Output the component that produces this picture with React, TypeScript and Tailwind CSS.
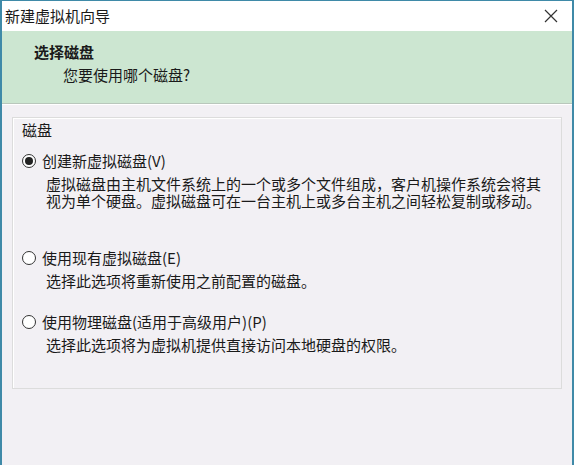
const font = "font-['Microsoft_YaHei','Noto_Sans_CJK_SC',sans-serif]";

const Radio = ({ checked }: { checked?: boolean }) => (
  <span className="flex h-[14px] w-[14px] shrink-0 items-center justify-center rounded-full border border-[#333] bg-white">
    {checked && <span className="h-[8px] w-[8px] rounded-full bg-[#222]" />}
  </span>
);

interface OptionProps {
  checked?: boolean;
  label: string;
  desc: string;
  className?: string;
}

const Option = ({ checked, label, desc, className }: OptionProps) => (
  <div className={className}>
    <div className="flex h-[18px] items-center gap-[6px]">
      <Radio checked={checked} />
      <span className="leading-[18px]">{label}</span>
    </div>
    <p className="mt-[5px] whitespace-pre-line pl-[24px] leading-[17px]">{desc}</p>
  </div>
);

export default function App() {
  return (
    <div
      className={`${font} flex h-[465px] w-[574px] flex-col border-x-2 border-t border-[#3f8aa8] bg-[#f2f0f4] text-[15px] text-[#1a1a1a]`}
    >
      <div className="flex h-[30px] shrink-0 items-center justify-between bg-white pl-[3px] pr-[14px]">
        <span className="text-[15px] leading-[18px]">新建虚拟机向导</span>
        <svg width="14" height="14" viewBox="0 0 14 14" className="text-[#333]">
          <path d="M1 1 L13 13 M13 1 L1 13" stroke="currentColor" strokeWidth="1.2" />
        </svg>
      </div>

      <div className="h-[73px] shrink-0 border-b border-[#b9c7bc] bg-[#cce6d1] pl-[32px] pt-[12px]">
        <div className="text-[15px] font-bold leading-[18px]">选择磁盘</div>
        <div className="mt-[5px] pl-[29px] text-[15px] leading-[18px]">您要使用哪个磁盘?</div>
      </div>
      <div className="h-px bg-white" />

      <div className="px-[10px] pt-[12px]">
        <div className="h-[272px] border border-[#dcdcdc] shadow-[inset_1px_1px_0_#ffffff] pl-[9px] pt-[3px]">
          <div className="leading-[18px]">磁盘</div>
          <Option
            checked
            className="mt-[13px]"
            label="创建新虚拟磁盘(V)"
            desc={
              "虚拟磁盘由主机文件系统上的一个或多个文件组成，客户机操作系统会将其\n视为单个硬盘。虚拟磁盘可在一台主机上或多台主机之间轻松复制或移动。"
            }
          />
          <Option
            className="mt-[40px]"
            label="使用现有虚拟磁盘(E)"
            desc="选择此选项将重新使用之前配置的磁盘。"
          />
          <Option
            className="mt-[24px]"
            label="使用物理磁盘(适用于高级用户)(P)"
            desc="选择此选项将为虚拟机提供直接访问本地硬盘的权限。"
          />
        </div>
      </div>
    </div>
  );
}
